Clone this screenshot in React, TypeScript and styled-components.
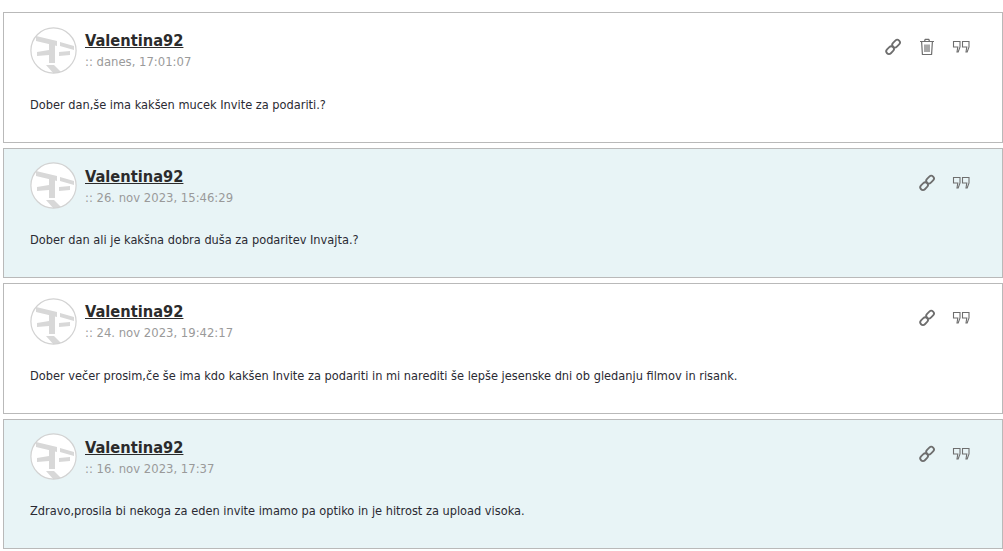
import * as React from 'react'
import styled, { createGlobalStyle } from 'styled-components'

const GlobalStyle = createGlobalStyle`
  html, body {
    margin: 0;
    padding: 0;
    background: #fff;
  }
  body {
    font-family: 'DejaVu Sans Condensed', 'DejaVu Sans', Tahoma, sans-serif;
    font-stretch: condensed;
    overflow: hidden;
  }
`

const List = styled.div`
  display: flex;
  flex-direction: column;
  gap: 5px;
  padding: 12px 0 0 3px;
  width: 1000px;
`

const Card = styled.article<{ $tinted: boolean }>`
  box-sizing: border-box;
  height: 130.5px;
  padding: 14px 26px 0 26px;
  border: 1px solid #b9b9b9;
  background: ${p => (p.$tinted ? '#e8f4f6' : '#fff')};
`

const Head = styled.header`
  display: flex;
  align-items: flex-start;
`

const Avatar = styled.svg`
  width: 47px;
  height: 47px;
  flex: none;
  margin: -0.5px 8px 0 0;
`

const Who = styled.div`
  display: flex;
  flex-direction: column;
  flex: 1;
  padding-top: 4px;
`

const Name = styled.a`
  font-size: 16.3px;
  line-height: 20px;
  font-weight: 700;
  color: #2b2b2b;
  text-decoration: underline;
`

const When = styled.span`
  margin-top: 3px;
  font-size: 12.95px;
  line-height: 15px;
  color: #9a9a9a;
`

const Actions = styled.div`
  display: flex;
  gap: 14px;
  padding: 10px 5px 0 0;
  color: #6e6e6e;
`

const Action = styled.svg`
  width: 20px;
  height: 20px;
  display: block;
`

const Body = styled.p`
  margin: 23px 0 0;
  font-size: 12.67px;
  line-height: 15px;
  color: #2a2a33;
`

const LinkIcon = () => (
  <Action viewBox="0 0 20 20" fill="none" stroke="currentColor" strokeWidth="1.8">
    <rect x="8.8" y="3.9" width="8.6" height="5.4" rx="2.7" transform="rotate(-45 13.100 6.600)" />
    <rect x="2.800" y="10.500" width="8.6" height="5.4" rx="2.7" transform="rotate(-45 7.100 13.200)" />
  </Action>
)

const TrashIcon = () => (
  <Action viewBox="0 0 20 20" fill="none" stroke="currentColor" strokeWidth="1.2" strokeLinejoin="round">
    <path d="M3 4.500h14M7.500 4.500l.7-2.200h3.600l.7 2.200M4.600 4.500l.8 13h9.200l.8-13" />
    <path d="M8 7.500V15M10 7.500V15M12 7.500V15" />
  </Action>
)

const QuoteIcon = () => (
  <Action viewBox="0 0 20 20" fill="none" stroke="currentColor" strokeWidth="1.1" strokeLinejoin="miter">
    <path d="M2.500 4.500h6.500v5.500L7.200 15H6l.8-5H2.500z" />
    <path d="M11.500 4.500H18v5.500L16.200 15H15l.8-5h-4.300z" />
  </Action>
)

const AvatarMark = () => (
  <Avatar viewBox="0 0 47 47" fill="none">
    <clipPath id="avatar-clip">
      <circle cx="23.5" cy="23.5" r="22.6" />
    </clipPath>
    <circle cx="23.5" cy="23.5" r="22.6" fill="#fff" />
    <g fill="#d8d8d8" clipPath="url(#avatar-clip)">
      <path d="M6 9l21 5v5L6 14z" />
      <path d="M30 15l14 4v4l-14-4z" />
      <path d="M19 16h6v20h-6z" />
      <path d="M7 25l12-2v5L7 29z" />
      <path d="M29 25l11-1v4l-11 1z" />
      <path d="M16 38h8l9 9H24z" />
    </g>
    <circle cx="23.5" cy="23.5" r="22.6" stroke="#d2d2d2" strokeWidth="1.2" />
  </Avatar>
)

const posts = [
  { when: ':: danes, 17:01:07', text: 'Dober dan,še ima kakšen mucek Invite za podariti.?', trash: true },
  { when: ':: 26. nov 2023, 15:46:29', text: 'Dober dan ali je kakšna dobra duša za podaritev Invajta.?', trash: false },
  {
    when: ':: 24. nov 2023, 19:42:17',
    text: 'Dober večer prosim,če še ima kdo kakšen Invite za podariti in mi narediti še lepše jesenske dni ob gledanju filmov in risank.',
    trash: false,
  },
  { when: ':: 16. nov 2023, 17:37', text: 'Zdravo,prosila bi nekoga za eden invite imamo pa optiko in je hitrost za upload visoka.', trash: false },
]

export default function App() {
  return (
    <>
      <GlobalStyle />
      <List>
        {posts.map((post, i) => (
          <Card key={post.when} $tinted={i % 2 === 1}>
            <Head>
              <AvatarMark />
              <Who>
                <Name>Valentina92</Name>
                <When>{post.when}</When>
              </Who>
              <Actions>
                <LinkIcon />
                {post.trash && <TrashIcon />}
                <QuoteIcon />
              </Actions>
            </Head>
            <Body>{post.text}</Body>
          </Card>
        ))}
      </List>
    </>
  )
}
